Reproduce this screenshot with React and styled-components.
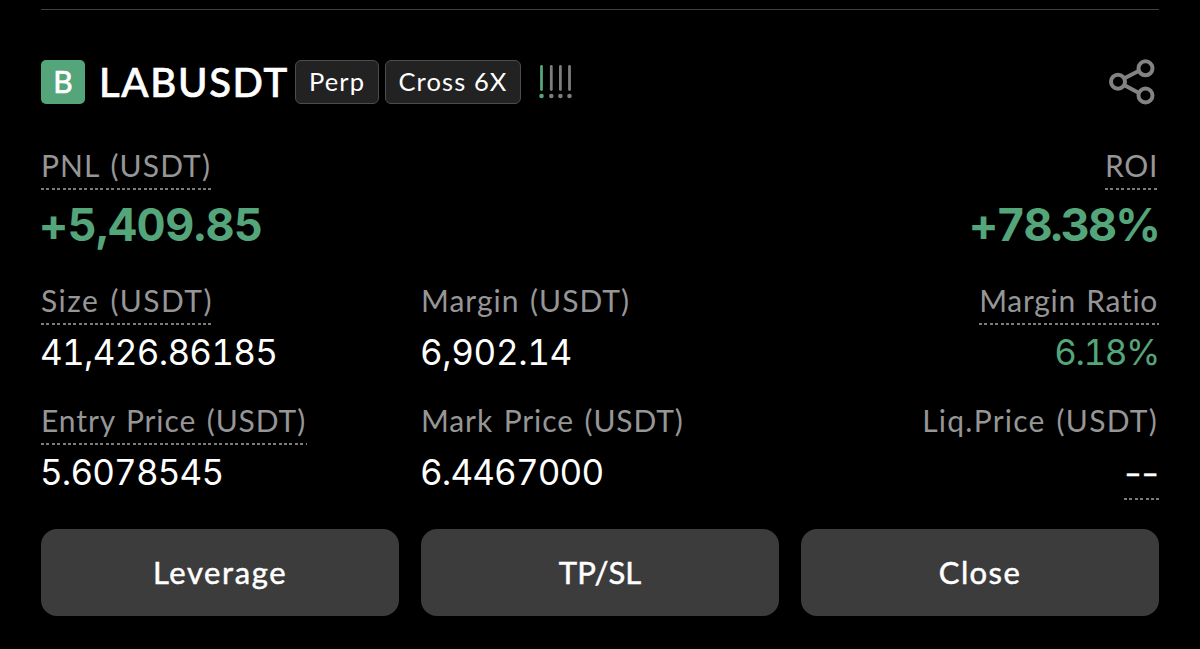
import React from 'react';
import styled, { createGlobalStyle } from 'styled-components';

const GlobalStyle = createGlobalStyle`
  body {
    margin: 0;
    background: #000;
  }

  * {
    box-sizing: border-box;
  }
`;

const Card = styled.main`
  width: 1200px;
  height: 649px;
  padding: 9px 41px 0;
  background: #000;
  color: #fff;
  font-family: Lato, 'Liberation Sans', sans-serif;
  overflow: hidden;
`;

const Divider = styled.hr`
  height: 1px;
  margin: 0 0 50px;
  border: 0;
  background: #404040;
`;

const Header = styled.header`
  display: flex;
  align-items: center;
  height: 44px;
`;

const Side = styled.span`
  width: 44px;
  height: 44px;
  margin-right: 14px;
  border-radius: 5px;
  background: #55a57b;
  font-size: 30px;
  line-height: 43px;
  text-align: center;
  -webkit-text-stroke: 0.7px #fff;
`;

const Symbol = styled.h1`
  width: 196px;
  margin: 0;
  font-size: 40px;
  font-weight: 500;
  line-height: 44px;
  letter-spacing: 1.7px;
  white-space: nowrap;
  -webkit-text-stroke: 0.7px #fff;
`;

const Tag = styled.span`
  width: ${props => props.$width}px;
  height: 44px;
  margin-right: 6px;
  border: 1px solid #4c4c4c;
  border-radius: 6px;
  background: #222;
  font-size: 25.5px;
  line-height: 41px;
  letter-spacing: 1.1px;
  text-align: center;
  white-space: nowrap;
`;

const Risk = styled.svg`
  margin-left: 12px;
`;

const Share = styled.svg`
  margin-left: auto;
`;

const Row = styled.section`
  display: grid;
  grid-template-columns: repeat(3, 358px);
  column-gap: 22px;
  height: ${props => props.$height}px;
`;

const Summary = styled(Row)`
  margin-top: 44px;
`;

const Stat = styled.div`
  display: flex;
  flex-direction: column;
  align-items: ${props => (props.$right ? 'flex-end' : 'flex-start')};
  grid-column: ${props => props.$column};
`;

const dashes = 'repeating-linear-gradient(90deg, #7c7c7c 0 3px, transparent 3px 5.4px)';

const Label = styled.div`
  height: 42px;
  padding: 0 1px 0 0;
  background: ${props => (props.$dashed ? dashes : 'none')} 0 100% / 100% 2px no-repeat;
  color: #969696;
  font-size: 30px;
  line-height: 34px;
  letter-spacing: ${props => props.$spacing}px;
  word-spacing: 2px;
  white-space: nowrap;
`;

const Value = styled.div`
  margin: 6px 0 0 -1px;
  color: ${props => (props.$green ? '#55a57b' : '#fff')};
  font-family: Inter, 'Liberation Sans', sans-serif;
  font-size: 35px;
  font-variant-numeric: tabular-nums;
  line-height: 42px;
  letter-spacing: ${props => props.$spacing}px;
  white-space: nowrap;
`;

const BigValue = styled(Value)`
  margin-left: -2px;
  font-size: 45px;
  font-weight: 700;
  line-height: 58px;
`;

const Empty = styled.div`
  display: flex;
  justify-content: center;
  gap: 4px;
  width: 35px;
  height: 49px;
  margin-top: 6px;
  background: ${dashes} 0 100% / 100% 2px no-repeat;
  font-family: 'Liberation Sans', sans-serif;
  font-size: 24px;
  font-weight: 700;
  line-height: 43px;
  -webkit-text-stroke: 0.4px #fff;
`;

const Actions = styled.footer`
  display: grid;
  grid-template-columns: repeat(3, 358px);
  column-gap: 22px;
`;

const Button = styled.button`
  height: 87px;
  padding: 0 0 1px;
  border: 0;
  border-radius: 16px;
  background: #3c3c3c;
  color: #fff;
  font-family: inherit;
  font-size: 31px;
  letter-spacing: ${props => props.$spacing}px;
  -webkit-text-stroke: 0.5px #fff;
`;

const RiskIcon = () => (
  <Risk width="36" height="36" viewBox="0 0 36 36">
    {[2.5, 12.3, 21.4, 30.5].map((x, i) => (
      <g key={x} fill={i ? '#7d7d7d' : '#55a57b'}>
        <rect x={x - 1.4} y="1" width="2.8" height="26" rx="1.4" />
        <circle cx={x} cy="32" r="2.3" />
      </g>
    ))}
  </Risk>
);

const ShareIcon = () => (
  <Share width="50" height="46" viewBox="0 0 50 46" fill="none" stroke="#838383" strokeWidth="4">
    <circle cx="9" cy="22.7" r="7" />
    <circle cx="36.5" cy="9.3" r="7" />
    <circle cx="36.5" cy="36.5" r="7" />
    <path d="M15.5 19.2 L30 11.8 M15.5 26.3 L30 34" />
  </Share>
);

const rows = [
  {
    height: 120,
    stats: [
      { label: 'Size (USDT)', value: '41,426.86185', dashed: true, ls: 1.45, vs: -0.7 },
      { label: 'Margin (USDT)', value: '6,902.14', ls: 1, vs: -0.4 },
      { label: 'Margin Ratio', value: '6.18%', dashed: true, green: true, ls: 0.7, vs: -1.4 },
    ],
  },
  {
    height: 126,
    stats: [
      { label: 'Entry Price (USDT)', value: '5.6078545', dashed: true, ls: 0.9, vs: -0.85 },
      { label: 'Mark Price (USDT)', value: '6.4467000', ls: 0.9, vs: -0.85 },
      { label: 'Liq.Price (USDT)', ls: 1.25 },
    ],
  },
];

const App = () => (
  <Card>
    <GlobalStyle />
    <Divider />
    <Header>
      <Side>B</Side>
      <Symbol>LABUSDT</Symbol>
      <Tag $width={84}>Perp</Tag>
      <Tag $width={136}>Cross 6X</Tag>
      <RiskIcon />
      <ShareIcon />
    </Header>
    <Summary $height={135}>
      <Stat $column={1}>
        <Label $dashed $spacing={1.1}>PNL (USDT)</Label>
        <BigValue $green $spacing={-0.45}>+5,409.85</BigValue>
      </Stat>
      <Stat $column={3} $right>
        <Label $dashed $spacing={0.7}>ROI</Label>
        <BigValue $green $spacing={-1.9}>+78.38%</BigValue>
      </Stat>
    </Summary>
    {rows.map(({ height, stats }) => (
      <Row key={height} $height={height}>
        {stats.map((s, i) => (
          <Stat key={s.label} $column={i + 1} $right={i === 2}>
            <Label $dashed={s.dashed} $spacing={s.ls}>{s.label}</Label>
            {s.value
              ? <Value $green={s.green} $spacing={s.vs}>{s.value}</Value>
              : (
                <Empty>
                  <span>–</span>
                  <span>–</span>
                </Empty>
              )}
          </Stat>
        ))}
      </Row>
    ))}
    <Actions>
      <Button $spacing={1.6}>Leverage</Button>
      <Button $spacing={0}>TP/SL</Button>
      <Button $spacing={1.4}>Close</Button>
    </Actions>
  </Card>
);

export default App;
